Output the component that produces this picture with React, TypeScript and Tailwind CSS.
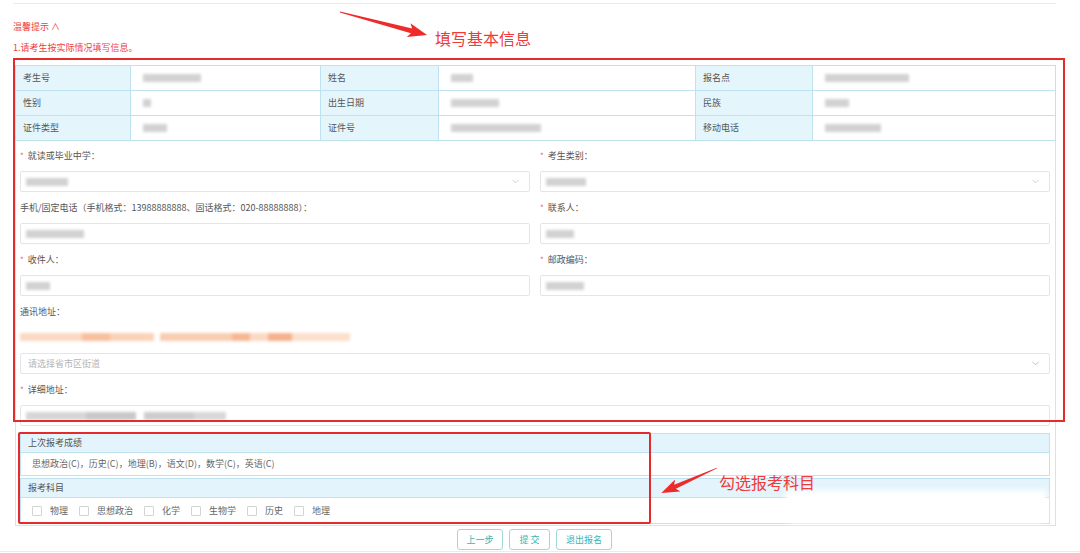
import { ChevronDown } from "lucide-react";

const ROWS = [
  [
    { label: "考生号", blur: "w-[58px]" },
    { label: "姓名", blur: "w-[22px]" },
    { label: "报名点", blur: "w-[84px]" },
  ],
  [
    { label: "性别", blur: "w-[8px]" },
    { label: "出生日期", blur: "w-[48px]" },
    { label: "民族", blur: "w-[24px]" },
  ],
  [
    { label: "证件类型", blur: "w-[24px]" },
    { label: "证件号", blur: "w-[90px]" },
    { label: "移动电话", blur: "w-[56px]" },
  ],
];

const COLS = [
  { label: "w-[115px]", value: "w-[190px]" },
  { label: "w-[118px]", value: "w-[257px]" },
  { label: "w-[117px]", value: "flex-1" },
];

const SUBJECTS = ["物理", "思想政治", "化学", "生物学", "历史", "地理"];

function Blur({ className }: { className: string }) {
  return <div className={`h-[8px] bg-[#d2d2d2] blur-[1.5px] ${className}`} />;
}

function Label({ text, req }: { text: string; req?: boolean }) {
  return (
    <div className="h-[14px] leading-[14px] flex items-center">
      {req && <span className="text-[#f0506e] mr-[4px] text-[8px]">*</span>}
      <span>{text}</span>
    </div>
  );
}

function Field({ label, req, blur, select }: { label: string; req?: boolean; blur: string; select?: boolean }) {
  return (
    <div className="pb-[9px]">
      <Label text={label} req={req} />
      <div className="mt-[8px] h-[21px] border border-[#e3e5e8] rounded-[2px] bg-white flex items-center pl-[5px] pr-[8px]">
        <Blur className={blur} />
        {select && <ChevronDown size={11} strokeWidth={1.2} className="ml-auto text-[#b0b0b0]" />}
      </div>
    </div>
  );
}

export default function App() {
  return (
    <div className="relative w-[1080px] h-[553px] overflow-hidden bg-white text-[9px] text-[#555] font-['Noto_Sans_CJK_SC',sans-serif]">
      <div className="pl-[13px]">
        <div className="mt-[3px] h-px w-[1043px] bg-[#ebebeb]" />
        <div className="mt-[17px] h-[12px] leading-[12px] text-[#f03c3c]">温馨提示 ∧</div>
        <div className="mt-[9px] h-[12px] leading-[12px] text-[#f03c3c]">1.请考生按实际情况填写信息。</div>
      </div>

      {/* basic info table */}
      <div className="ml-[15px] w-[1041px] mt-[11px] border-t border-x border-[#bfe2f1]">
        {ROWS.map((row, i) => (
          <div key={i} className="flex h-[25px] border-b border-[#bfe2f1]">
            {row.map((c, j) => (
              <div key={j} className={`flex ${j === 2 ? "flex-1" : ""}`}>
                <div className={`${COLS[j].label} bg-[#e5f5fc] border-r border-[#bfe2f1] flex items-center pl-[7px]`}>
                  {c.label}
                </div>
                <div className={`${COLS[j].value} ${j < 2 ? "border-r border-[#bfe2f1]" : ""} flex items-center pl-[12px]`}>
                  <Blur className={c.blur} />
                </div>
              </div>
            ))}
          </div>
        ))}
      </div>

      {/* form panel */}
      <div className="ml-[15px] w-[1041px] border-x border-b border-[#cde6f2] pt-[8px] pl-[4px] pr-[5px] pb-px">
        <div className="grid grid-cols-2 gap-x-[10px]">
          <Field label="就读或毕业中学：" req blur="w-[42px]" select />
          <Field label="考生类别：" req blur="w-[40px]" select />
          <Field label="手机/固定电话（手机格式：13988888888、固话格式：020-88888888）：" blur="w-[58px]" />
          <Field label="联系人：" req blur="w-[28px]" />
          <Field label="收件人：" req blur="w-[24px]" />
          <Field label="邮政编码：" req blur="w-[38px]" />
        </div>

        <Label text="通讯地址：" />
        <div className="mt-[14px] h-[8px] flex blur-[1.5px]">
          <div className="w-[62px] bg-[#fbd9c4]" />
          <div className="w-[28px] bg-[#f7bf9e]" />
          <div className="w-[44px] bg-[#fbd2b8]" />
          <div className="w-[6px] bg-white" />
          <div className="w-[72px] bg-[#f9cdb1]" />
          <div className="w-[18px] bg-[#f6b894]" />
          <div className="w-[18px] bg-[#fbd9c4]" />
          <div className="w-[24px] bg-[#f5b28c]" />
          <div className="w-[58px] bg-[#fcdfcd]" />
        </div>
        <div className="mt-[12px] h-[21px] border border-[#e3e5e8] rounded-[2px] flex items-center pl-[7px] pr-[8px] text-[#b5b5b5]">
          请选择省市区街道
          <ChevronDown size={11} strokeWidth={1.2} className="ml-auto text-[#909090]" />
        </div>

        <div className="mt-[9px]">
          <Label text="详细地址：" req />
        </div>
        <div className="mt-[8px] h-[21px] border border-[#e3e5e8] rounded-[2px] flex items-center pl-[5px]">
          <div className="h-[8px] flex blur-[1.5px]">
            <div className="w-[60px] bg-[#d6d6d6]" />
            <div className="w-[50px] bg-[#c8c8c8]" />
            <div className="w-[8px] bg-white" />
            <div className="w-[50px] bg-[#cdcdcd]" />
            <div className="w-[32px] bg-[#d8d8d8]" />
          </div>
        </div>

        {/* last result */}
        <div className="mt-[7px] border border-[#bfe2f1]">
          <div className="h-[19px] bg-[#e3f4fc] border-b border-[#bfe2f1] flex items-center pl-[7px]">上次报考成绩</div>
          <div className="h-[22px] flex items-center pl-[11px] text-[#666]">
            思想政治(C)，历史(C)，地理(B)，语文(D)，数学(C)，英语(C)
          </div>
        </div>

        {/* subjects */}
        <div className="mt-[2px] border border-[#bfe2f1]">
          <div className="h-[19px] bg-[#e3f4fc] border-b border-[#bfe2f1] flex items-center pl-[7px]">报考科目</div>
          <div className="h-[25px] flex items-center pl-[11px] gap-[11px] text-[#666]">
            {SUBJECTS.map(s => (
              <label key={s} className="flex items-center gap-[8px]">
                <span className="w-[10px] h-[10px] border border-[#d4d4d4] rounded-[1px] bg-white" />
                {s}
              </label>
            ))}
          </div>
        </div>
      </div>

      {/* actions */}
      <div className="mt-[3px] ml-[457px] flex gap-[6px] text-[#3db0b0]">
        <button className="w-[46px] h-[21px] border border-[#9fd8d8] rounded-[3px] bg-white">上一步</button>
        <button className="w-[41px] h-[21px] border border-[#9fd8d8] rounded-[3px] bg-white whitespace-pre">提 交</button>
        <button className="w-[56px] h-[21px] border border-[#9fd8d8] rounded-[3px] bg-white">退出报名</button>
      </div>
      <div className="mt-px h-px bg-[#ececec]" />

      {/* annotation overlays */}
      <div className="absolute left-[785px] top-[490px] w-[262px] h-[33px] bg-white blur-[3px] rounded" />
      <div className="absolute left-[13px] top-[58px] w-[1052px] h-[364px] border-2 border-[#e42b2b]" />
      <div className="absolute left-[18px] top-[432px] w-[633px] h-[92px] border-2 border-[#e42b2b] rounded-[2px]" />
      <svg className="absolute left-0 top-0" width="1080" height="553">
        <g transform="translate(340 12) rotate(14.8)" fill="#ee2b2b">
          <polygon points="0,-0.4 74,-2.4 71,-7 90,0 71,7 74,2.4 0,0.4" />
        </g>
        <g transform="translate(717 468) rotate(155.9)" fill="#ee2b2b">
          <polygon points="0,-0.4 46,-2.2 43,-6.5 61,0 43,6.5 46,2.2 0,0.4" />
        </g>
      </svg>
      <div className="absolute left-[435px] top-[28px] text-[16px] leading-[20px] text-[#ef3b3b]">填写基本信息</div>
      <div className="absolute left-[719px] top-[472px] text-[16px] leading-[20px] text-[#ef3b3b]">勾选报考科目</div>
    </div>
  );
}
